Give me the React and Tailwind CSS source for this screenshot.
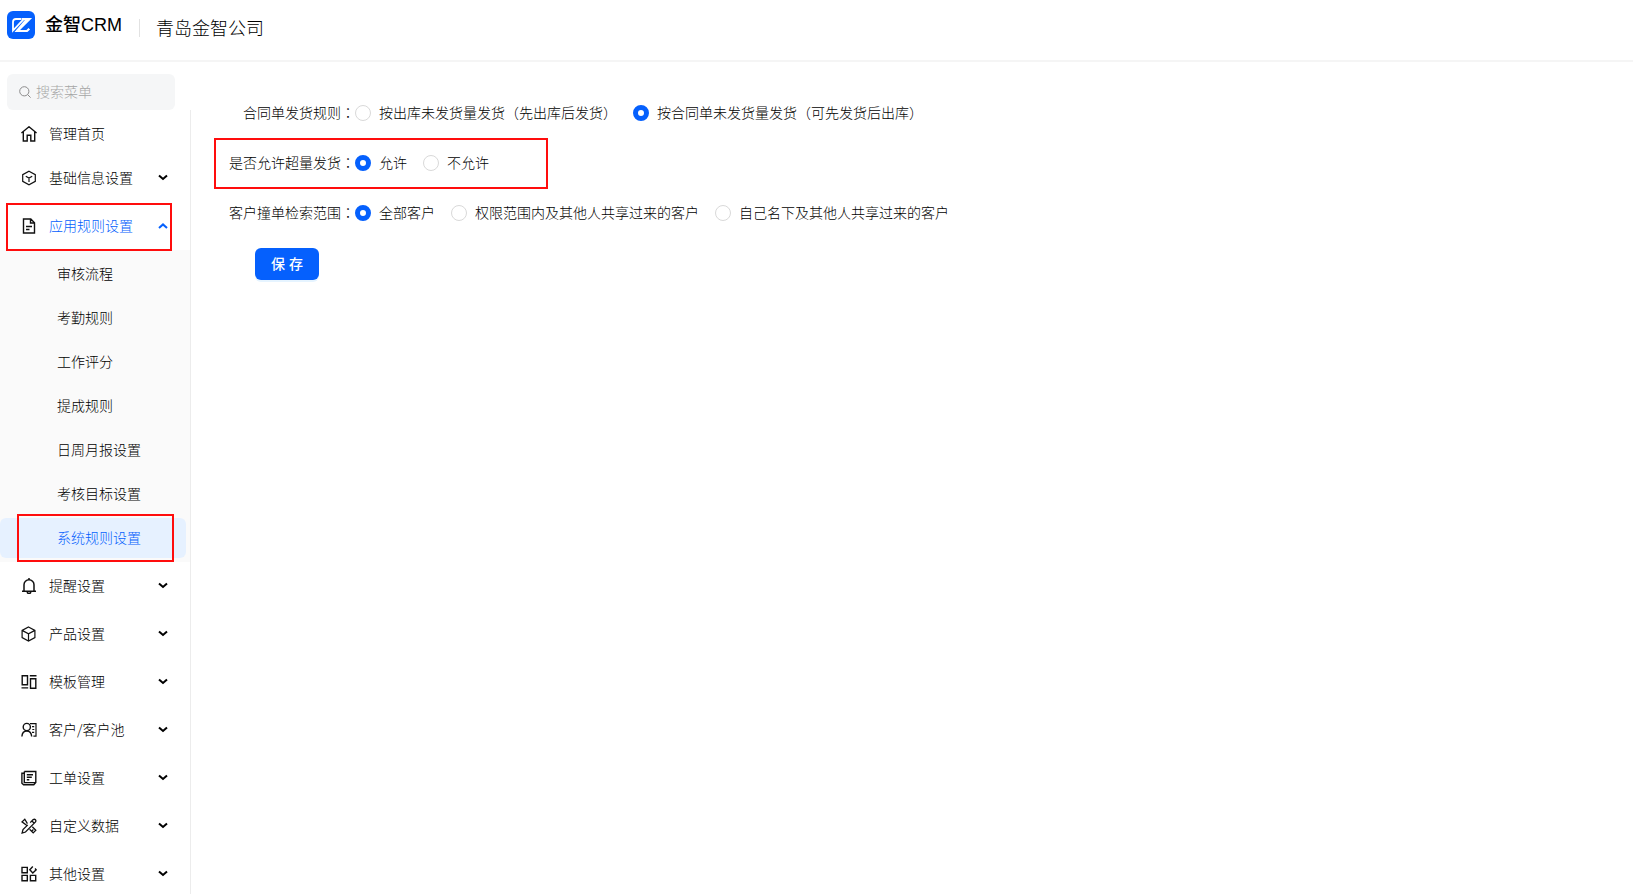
import { useState } from "react";

const Ico = ({ children }) => (
  <svg className="size-4 shrink-0 text-[#111]" viewBox="0 0 16 16" fill="none" stroke="currentColor" strokeWidth="1.2" aria-hidden="true">
    {children}
  </svg>
);

const icons = {
  home: <Ico><path strokeWidth="1.400" d="M.4 7 8 .8 15.600 7M2.300 5.800V15h3.900V9.300h3.600V15h3.900V5.800" /></Ico>,
  hex: <Ico><path d="M8 1.200 14.300 4.600v6.800L8 14.800 1.700 11.400V4.600zM4.800 6.200 8 8l3.200-1.800M8 8v4" /></Ico>,
  doc: <Ico><path strokeWidth="1.4" d="M2.500 1h7.300l3.700 3.700V15h-11zM9.500 1v4h4M5 8.500h6M5 11.500h3.500" /></Ico>,
  bell: <Ico><path strokeWidth="1.500" d="M3 13V6.800a5 5 0 0 1 10 0V13M1 13.300h14M8 0v2M6.300 14a1.700 1.500 0 0 0 3.400 0" /></Ico>,
  cube: <Ico><path d="M7.500 1 13.900 4.400v7.200l-6.400 3.400-6.400-3.400V4.400zM1.100 4.400l6.400 3.500 6.400-3.500M7.500 7.900v7" /></Ico>,
  template: <Ico><path strokeWidth="1.400" d="M1.200 1.700h5.300v9H1.200zM9.500 4.800h5.300v9.500H9.500zM.500 13.900h6.700M8.800 1.700h6.700" /></Ico>,
  customer: <Ico><circle cx="5.800" cy="5" r="3.600" strokeWidth="1.400" /><path strokeWidth="1.400" d="M.9 14.500c.2-3.300 2-5.500 4.900-5.500s4.600 2.200 4.900 5.500" /><path d="M9 1.600h6v12.600h-2.600M11 4.700h2.200M11.300 7.500h2M11 10.300h2.200" /></Ico>,
  order: <Ico><path strokeWidth="1.400" d="M3.300 1.500h11.500v11l-2 2.300H2.600L.9 13.200V3.200h2.400M3.300 1.500V12.600h11M5.800 4.800h6.200M5.800 7.300h5M5.800 9.800h2.500" /></Ico>,
  design: (
    <Ico>
      <g strokeWidth="1.300">
        <path d="M6.400 5.600 3.800 1.200 1 3.900l4.600 3.300M9.200 4.600l3-3q1.300-.8 2.200.1t.1 2.200L4.500 14l-3.400 1 .9-3.500L6.800 6.900M11.300 8.800l3.500 3.500-2.600 2.600-3.600-3.600M10.900 13l1.500-1.500M11 3l2.200 2.200" />
      </g>
    </Ico>
  ),
  apps: <Ico><path strokeWidth="1.400" d="M1 1.400h5.300v5.300H1zM1 9.400h5.300v5.300H1zM9.400 9.400h5.300v5.300H9.400zM11.800.6 8.800 3.800l3 3.200 3.400-3.200-1.200-1.300" /></Ico>,
};

const Chevron = ({ up }) => (
  <svg className="h-2 w-[10px] shrink-0" viewBox="0 0 10 8" fill="none" stroke="currentColor" strokeWidth="2" aria-hidden="true">
    <path d={up ? "M1 6 5 2.400 9 6" : "M1 1.400 5 5 9 1.400"} />
  </svg>
);

const menu = [
  { label: "基础信息设置", icon: "hex" },
  {
    label: "应用规则设置",
    icon: "doc",
    open: true,
    children: ["审核流程", "考勤规则", "工作评分", "提成规则", "日周月报设置", "考核目标设置", "系统规则设置"],
  },
  { label: "提醒设置", icon: "bell" },
  { label: "产品设置", icon: "cube" },
  { label: "模板管理", icon: "template" },
  { label: "客户/客户池", icon: "customer" },
  { label: "工单设置", icon: "order" },
  { label: "自定义数据", icon: "design" },
  { label: "其他设置", icon: "apps" },
];

const Mark = ({ className }) => (
  <span className={`pointer-events-none absolute border-2 border-[#ff0d0d] ${className}`} />
);

// Punctuation in the light CJK face, with the colon centred in its full-width cell.
const Punct = ({ children }) => <span className="font-['Noto_Sans_CJK_TC',sans-serif] leading-none">{children}</span>;

const withPunct = (text) =>
  text.split(/([（）：/])/).map((part, i) => (i % 2 ? <Punct key={i}>{part}</Punct> : part));

const rules = [
  { name: "ship", label: "合同单发货规则：", value: 1, options: ["按出库未发货量发货（先出库后发货）", "按合同单未发货量发货（可先发货后出库）"] },
  { name: "over", label: "是否允许超量发货：", value: 0, options: ["允许", "不允许"], marked: true },
  { name: "scope", label: "客户撞单检索范围：", value: 0, options: ["全部客户", "权限范围内及其他人共享过来的客户", "自己名下及其他人共享过来的客户"] },
];

function Rule({ rule }) {
  const [value, setValue] = useState(rule.value);
  return (
    <div role="radiogroup" aria-labelledby={rule.name} className="relative flex h-[50px] items-center">
      <span id={rule.name} className="w-[164px] shrink-0 text-right">{withPunct(rule.label)}</span>
      <div className="flex gap-4">
        {rule.options.map((option, i) => (
          <label key={option} className="flex items-center gap-2 whitespace-nowrap">
            <input
              type="radio"
              name={rule.name}
              checked={value === i}
              onChange={() => setValue(i)}
              className="size-4 appearance-none rounded-full border border-[#d9d9d9] bg-white checked:border-5 checked:border-[#0560fd]"
            />
            <span>{withPunct(option)}</span>
          </label>
        ))}
      </div>
      {rule.marked && <Mark className="top-0 left-[23px] h-[51px] w-[334px]" />}
    </div>
  );
}

export default function App() {
  return (
    <div className="flex h-screen flex-col overflow-hidden bg-white font-['Liberation_Sans','Noto_Sans_CJK_SC',sans-serif] text-sm font-light text-black">
      <header className="flex h-[62px] shrink-0 items-start border-b-2 border-[#f5f5f5] pl-[7px]">
        <svg className="mt-[11px] size-7" viewBox="0 0 28 28" role="img" aria-label="金智CRM">
          <rect width="28" height="28" rx="6" fill="#0560fd" />
          <g fill="none" stroke="#fff">
            <path strokeWidth="1.800" d="M14.500 8H9Q6 8 6 11v8.500L16.500 8.300" />
            <path strokeWidth="2.200" d="M15 8h7.500L10.500 20H20l2.300-2.300" />
          </g>
          <path d="M19.500 7H23.500L10.500 21H7.500z" fill="#fff" />
        </svg>
        <h1 className="mt-[11px] ml-[10px] text-lg leading-7 font-medium">金智CRM</h1>
        <span className="mt-[19px] ml-[17px] h-[18px] w-px bg-[#e2e2e2]" />
        <span className="mt-[15px] ml-4 text-lg leading-7">青岛金智公司</span>
      </header>
      <div className="flex min-h-0 flex-1">
        <aside className="flex w-[191px] shrink-0 flex-col pt-3">
          <label className="ml-[7px] flex h-9 w-[168px] shrink-0 items-center gap-[5px] rounded-md bg-[#f5f6f7] pl-3">
            <svg className="size-3 shrink-0 text-[#8c8c8c]" viewBox="0 0 12 12" fill="none" stroke="currentColor" aria-hidden="true">
              <circle cx="5.300" cy="5.300" r="4.600" />
              <path d="m8.600 8.600 3 3" />
            </svg>
            <input aria-label="搜索菜单" placeholder="搜索菜单" className="w-full min-w-0 bg-transparent outline-none placeholder:text-[#a6a6a6]" />
          </label>
          <nav className="min-h-0 flex-1 overflow-hidden border-r border-[#ececec] pt-1">
            <a href="#home" className="flex h-10 items-center gap-3 pl-[21px]">
              {icons.home}
              管理首页
            </a>
            {menu.map((item) => (
              <div key={item.label}>
                <button
                  type="button"
                  aria-expanded={!!item.open}
                  className={`relative flex h-12 w-full items-center gap-3 pr-[22px] pl-[21px] text-left ${item.open ? "text-[#0560fd]" : ""}`}
                >
                  {icons[item.icon]}
                  <span className="flex-1">{withPunct(item.label)}</span>
                  <Chevron up={item.open} />
                  {item.open && <Mark className="top-px left-[6px] h-12 w-[166px]" />}
                </button>
                {item.children && (
                  <div className="flex flex-col gap-1 bg-[#fafafa] py-1 pr-1">
                    {item.children.map((child) =>
                      child === "系统规则设置" ? (
                        <a key={child} href="#rule" aria-current="page" className="relative flex h-10 items-center rounded-md bg-[#e6f1ff] pl-[57px] text-[#0560fd]">
                          {child}
                          <Mark className="-top-1 left-[17px] h-12 w-[157px]" />
                        </a>
                      ) : (
                        <a key={child} href="#rule" className="flex h-10 items-center pl-[57px]">{child}</a>
                      )
                    )}
                  </div>
                )}
              </div>
            ))}
          </nav>
        </aside>
        <main className="min-w-0 flex-1 pt-[26px]">
          <form onSubmit={(e) => e.preventDefault()}>
            {rules.map((rule) => (
              <Rule key={rule.name} rule={rule} />
            ))}
            <button type="submit" className="mt-[10px] ml-16 h-8 w-16 rounded-md bg-[#0560fd] font-medium text-white shadow-[0_2px_0_rgba(5,145,255,0.1)]">
              保 存
            </button>
          </form>
        </main>
      </div>
    </div>
  );
}
